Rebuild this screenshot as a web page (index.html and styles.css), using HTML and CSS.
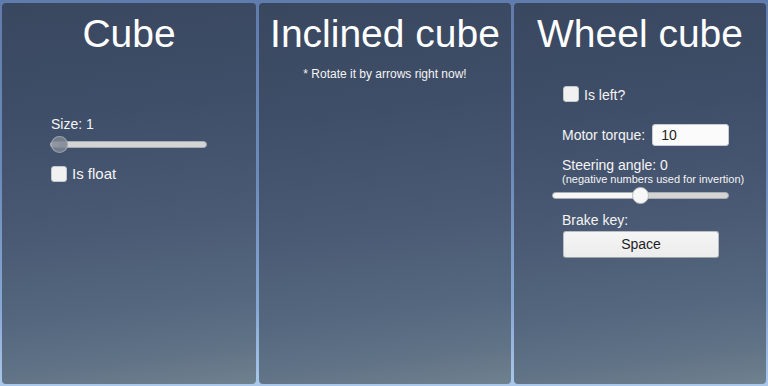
FILE: index.html
```html
<!DOCTYPE html>
<html>
<head>
<meta charset="utf-8">
<link rel="stylesheet" href="styles.css">
</head>
<body>
<div class="screen">
  <section class="panel">
    <h1 class="title">Cube</h1>
    <div class="label size-label">Size: 1</div>
    <div class="slider slider-size">
      <div class="track"><div class="fill fill-min"></div></div>
      <div class="thumb thumb-grey"></div>
    </div>
    <label class="check-row float-row">
      <span class="box"></span><span class="check-text big">Is float</span>
    </label>
  </section>
  <section class="panel">
    <h1 class="title">Inclined cube</h1>
    <p class="hint">* Rotate it by arrows right now!</p>
  </section>
  <section class="panel">
    <h1 class="title">Wheel cube</h1>
    <label class="check-row left-row">
      <span class="box"></span><span class="check-text">Is left?</span>
    </label>
    <div class="torque-row">
      <span class="label">Motor torque:</span>
      <span class="input">10</span>
    </div>
    <div class="label steer-label">Steering angle: 0</div>
    <div class="sub">(negative numbers used for invertion)</div>
    <div class="slider slider-steer">
      <div class="track"><div class="fill fill-half"></div></div>
      <div class="thumb thumb-white"></div>
    </div>
    <div class="label brake-label">Brake key:</div>
    <div class="button">Space</div>
  </section>
</div>
</body>
</html>
```
FILE: styles.css
```css
* { box-sizing: border-box; }
html, body { margin: 0; padding: 0; }
body {
  width: 768px;
  height: 386px;
  overflow: hidden;
  font-family: "Liberation Sans", Arial, sans-serif;
  background: linear-gradient(180deg, #5f7cad 0%, #6d8bba 45%, #88a8d4 80%, #a9c8ec 100%);
}
.screen {
  display: grid;
  grid-template-columns: 254px 252px 252px;
  column-gap: 3px;
  padding: 3px 2px 2px 2px;
  height: 386px;
}
.panel {
  border-radius: 4px;
  background: linear-gradient(173deg, #39475f 0%, #3f4e68 28%, #4a5a74 58%, #55677f 78%, #617386 91%, #6f828f 100%);
  color: #f4f4f4;
  display: flex;
  flex-direction: column;
  align-items: flex-start;
  padding-top: 8px;
}
.title {
  margin: 0;
  width: 100%;
  text-align: center;
  font-weight: normal;
  font-size: 39px;
  line-height: 46px;
  color: #fff;
}
.label {
  font-size: 14px;
  line-height: 16px;
}
.size-label { margin: 59px 0 0 49px; }

.slider {
  position: relative;
  height: 16px;
}
.slider .track {
  position: absolute;
  left: 0; right: 0;
  top: 5px;
  height: 7px;
  border-radius: 4px;
  background: #d4d4d4;
  border: 1px solid #a9adb3;
  overflow: hidden;
}
.slider .fill {
  height: 100%;
  background: #f6f6f6;
  border-radius: 4px;
}
.fill-min { width: 8px; }
.fill-half { width: 50%; }
.slider .thumb {
  position: absolute;
  top: 0;
  width: 17px;
  height: 17px;
  border-radius: 50%;
}
.slider-size { width: 157px; margin: 4px 0 0 48px; }
.thumb-grey {
  left: 1px;
  background: rgba(125, 133, 146, 0.85);
  border: 1px solid rgba(160, 166, 176, 0.9);
}
.slider-steer { width: 177px; margin: 2px 0 0 38px; }
.thumb-white {
  left: 80px;
  top: -1px;
  background: #f7f7f7;
  border: 1px solid #b7bbc1;
}

.check-row {
  display: flex;
  align-items: flex-start;
  gap: 5px;
}
.box {
  width: 16px;
  height: 16px;
  border-radius: 3px;
  background: #f1f1f1;
  border: 1px solid #c4c7cc;
}
.check-text {
  font-size: 14px;
  line-height: 16px;
  padding-top: 1px;
}
.check-text.big { font-size: 15px; padding-top: 0; }
.float-row { margin: 14px 0 0 49px; }

.hint {
  margin: 10px 0 0 0;
  width: 100%;
  text-align: center;
  font-size: 12px;
  line-height: 14px;
}

.left-row { margin: 29px 0 0 49px; }
.torque-row {
  display: flex;
  align-items: center;
  height: 22px;
  margin: 21px 0 0 48px;
}
.torque-row .label { line-height: 22px; }
.input {
  margin-left: 7px;
  width: 77px;
  height: 22px;
  border-radius: 3px;
  background: #fbfbfb;
  border: 1px solid #c8ccd2;
  color: #1e1e1e;
  font-size: 14px;
  line-height: 20px;
  padding-left: 8px;
}
.steer-label { margin: 12px 0 0 48px; line-height: 15px; }
.sub {
  margin: 0 0 0 48px;
  font-size: 11px;
  line-height: 12px;
}
.brake-label { margin: 9px 0 0 48px; }
.button {
  margin: 3px 0 0 49px;
  width: 156px;
  height: 27px;
  border-radius: 3px;
  background: linear-gradient(180deg, #f5f5f5 0%, #ececec 100%);
  border: 1px solid #b9bcc2;
  border-bottom-color: #9da1a8;
  color: #1e1e1e;
  font-size: 14px;
  line-height: 25px;
  text-align: center;
}
```
